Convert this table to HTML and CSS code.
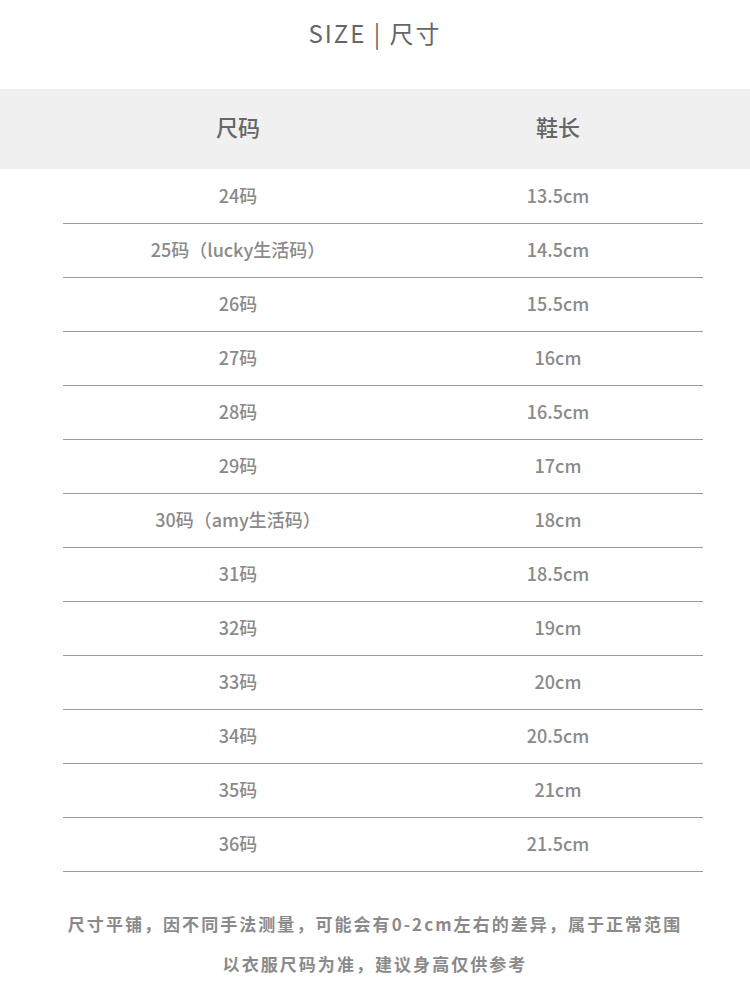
FILE: index.html
```html
<!DOCTYPE html>
<html lang="zh">
<head>
<meta charset="utf-8">
<title>SIZE | 尺寸</title>
<link rel="stylesheet" href="styles.css">
</head>
<body>
<div class="page">
  <h1 class="title">SIZE | 尺寸</h1>
  <div class="head-band">
    <div class="grid head">
      <div class="cell">尺码</div>
      <div class="cell">鞋长</div>
    </div>
  </div>
  <div class="rows">
    <div class="grid row"><div class="cell">24码</div><div class="cell">13.5cm</div></div>
    <div class="grid row"><div class="cell">25码（lucky生活码）</div><div class="cell">14.5cm</div></div>
    <div class="grid row"><div class="cell">26码</div><div class="cell">15.5cm</div></div>
    <div class="grid row"><div class="cell">27码</div><div class="cell">16cm</div></div>
    <div class="grid row"><div class="cell">28码</div><div class="cell">16.5cm</div></div>
    <div class="grid row"><div class="cell">29码</div><div class="cell">17cm</div></div>
    <div class="grid row"><div class="cell">30码（amy生活码）</div><div class="cell">18cm</div></div>
    <div class="grid row"><div class="cell">31码</div><div class="cell">18.5cm</div></div>
    <div class="grid row"><div class="cell">32码</div><div class="cell">19cm</div></div>
    <div class="grid row"><div class="cell">33码</div><div class="cell">20cm</div></div>
    <div class="grid row"><div class="cell">34码</div><div class="cell">20.5cm</div></div>
    <div class="grid row"><div class="cell">35码</div><div class="cell">21cm</div></div>
    <div class="grid row"><div class="cell">36码</div><div class="cell">21.5cm</div></div>
  </div>
  <div class="note">
    <p>尺寸平铺，因不同手法测量，可能会有0-2cm左右的差异，属于正常范围</p>
    <p>以衣服尺码为准，建议身高仅供参考</p>
  </div>
</div>
</body>
</html>
```
FILE: styles.css
```css
html, body {
  margin: 0;
  padding: 0;
  background: #ffffff;
}
.page {
  width: 750px;
  font-family: "Noto Sans CJK SC", "Noto Sans", sans-serif;
}
.title {
  margin: 0;
  padding-top: 18px;
  height: 89px;
  box-sizing: border-box;
  line-height: 30px;
  font-size: 24px;
  font-weight: 400;
  letter-spacing: 2px;
  color: #666666;
  text-align: center;
}
.head-band {
  background: #f0f0f0;
  height: 80px;
}
.grid {
  display: grid;
  grid-template-columns: 350px 290px;
  width: 640px;
  margin-left: 63px;
}
.cell {
  text-align: center;
}
.head {
  height: 80px;
  box-sizing: border-box;
  padding-bottom: 6px;
  align-items: center;
  font-size: 22px;
  font-weight: 500;
  color: #666666;
}
.rows {
  padding-top: 1px;
}
.row {
  height: 49px;
  padding-bottom: 4px;
  align-items: center;
  border-bottom: 1px solid #999999;
  font-size: 18px;
  font-weight: 500;
  color: #8a8a8a;
}
.note {
  padding-top: 32px;
  text-align: center;
  color: #8a8a8a;
  font-size: 17px;
  font-weight: 700;
  letter-spacing: 2.05px;
}
.note p {
  margin: 0;
  line-height: 40px;
}
```
